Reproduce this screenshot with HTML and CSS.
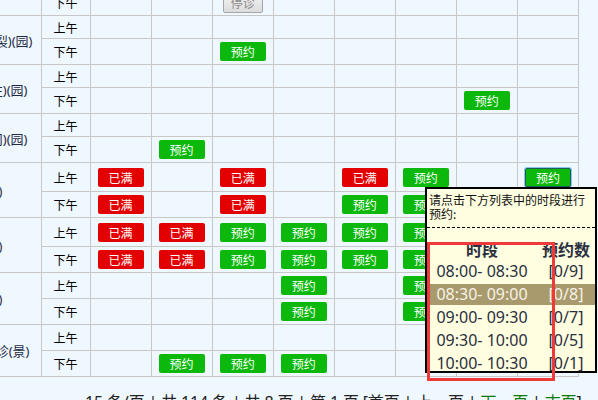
FILE: index.html
```html
<!DOCTYPE html>
<html lang="zh-CN">
<head>
<meta charset="utf-8">
<title>预约排班</title>
<link rel="stylesheet" href="styles.css">
</head>
<body>
<div class="page">
  <table class="sched">
    <colgroup>
      <col class="c-name"><col class="c-half">
      <col class="c-day"><col class="c-day"><col class="c-day"><col class="c-day">
      <col class="c-day"><col class="c-day"><col class="c-day"><col class="c-day">
    </colgroup>
    <tbody>
      <tr class="r26">
        <td class="name"></td><td class="half">下午</td>
        <td></td><td></td><td><button class="btn stop">停诊</button></td><td></td><td></td><td></td><td></td><td></td>
      </tr>

      <tr class="r23">
        <td class="name pr8" rowspan="2"><span>口腔颌面外科(唇腭裂)(园)</span></td><td class="half">上午</td>
        <td></td><td></td><td></td><td></td><td></td><td></td><td></td><td></td>
      </tr>
      <tr class="r26">
        <td class="half">下午</td>
        <td></td><td></td><td><button class="btn ok">预约</button></td><td></td><td></td><td></td><td></td><td></td>
      </tr>

      <tr class="r23">
        <td class="name pr13" rowspan="2"><span>口腔修复科(桩柱)(园)</span></td><td class="half">上午</td>
        <td></td><td></td><td></td><td></td><td></td><td></td><td></td><td></td>
      </tr>
      <tr class="r26">
        <td class="half">下午</td>
        <td></td><td></td><td></td><td></td><td></td><td></td><td><button class="btn ok">预约</button></td><td></td>
      </tr>

      <tr class="r23">
        <td class="name pr13" rowspan="2"><span>口腔急诊(夜间)(园)</span></td><td class="half">上午</td>
        <td></td><td></td><td></td><td></td><td></td><td></td><td></td><td></td>
      </tr>
      <tr class="r26">
        <td class="half">下午</td>
        <td></td><td><button class="btn ok">预约</button></td><td></td><td></td><td></td><td></td><td></td><td></td>
      </tr>

      <tr class="r29">
        <td class="name pr38" rowspan="2"><span>口腔正畸科专家门诊(主任)</span></td><td class="half">上午</td>
        <td><button class="btn full">已满</button></td><td></td><td><button class="btn full">已满</button></td><td></td>
        <td><button class="btn full">已满</button></td><td><button class="btn ok">预约</button></td><td></td><td><button class="btn ok focus">预约</button></td>
      </tr>
      <tr class="r26">
        <td class="half">下午</td>
        <td><button class="btn full">已满</button></td><td></td><td><button class="btn full">已满</button></td><td></td>
        <td><button class="btn ok">预约</button></td><td><button class="btn ok">预约</button></td><td></td><td><button class="btn ok">预约</button></td>
      </tr>

      <tr class="r29">
        <td class="name pr38" rowspan="2"><span>口腔内科专家门诊(副主任)</span></td><td class="half">上午</td>
        <td><button class="btn full">已满</button></td><td><button class="btn full">已满</button></td><td><button class="btn ok">预约</button></td><td><button class="btn ok">预约</button></td>
        <td><button class="btn ok">预约</button></td><td><button class="btn ok">预约</button></td><td><button class="btn ok">预约</button></td><td></td>
      </tr>
      <tr class="r26">
        <td class="half">下午</td>
        <td><button class="btn full">已满</button></td><td><button class="btn full">已满</button></td><td><button class="btn ok">预约</button></td><td><button class="btn ok">预约</button></td>
        <td><button class="btn ok">预约</button></td><td><button class="btn ok">预约</button></td><td><button class="btn ok">预约</button></td><td></td>
      </tr>

      <tr class="r26">
        <td class="name pr38" rowspan="2"><span>儿童口腔科普通门诊(医师)</span></td><td class="half">上午</td>
        <td></td><td></td><td></td><td><button class="btn ok">预约</button></td>
        <td></td><td><button class="btn ok">预约</button></td><td></td><td></td>
      </tr>
      <tr class="r26">
        <td class="half">下午</td>
        <td></td><td></td><td></td><td><button class="btn ok">预约</button></td>
        <td></td><td><button class="btn ok">预约</button></td><td></td><td></td>
      </tr>

      <tr class="r26">
        <td class="name pr11" rowspan="2"><span>口腔特需门诊(景)</span></td><td class="half">上午</td>
        <td></td><td></td><td></td><td></td><td></td><td></td><td></td><td></td>
      </tr>
      <tr class="r26">
        <td class="half">下午</td>
        <td></td><td><button class="btn ok">预约</button></td><td><button class="btn ok">预约</button></td><td><button class="btn ok">预约</button></td>
        <td></td><td></td><td></td><td></td>
      </tr>
    </tbody>
  </table>

  <div class="pager">15 条/页 | 共 114 条 | 共 8 页 | 第 1 页 [首页 | 上一页 | <a class="link">下一页</a> | <a class="link">末页</a>]</div>

  <div class="tip">
    <div class="tip-msg">请点击下方列表中的时段进行预约:</div>
    <div class="tip-sep"></div>
    <table class="slots">
      <thead>
        <tr><th>时段</th><th>预约数</th></tr>
      </thead>
      <tbody>
        <tr><td>08:00- 08:30</td><td>[0/9]</td></tr>
        <tr class="hover"><td>08:30- 09:00</td><td>[0/8]</td></tr>
        <tr><td>09:00- 09:30</td><td>[0/7]</td></tr>
        <tr><td>09:30- 10:00</td><td>[0/5]</td></tr>
        <tr><td>10:00- 10:30</td><td>[0/1]</td></tr>
      </tbody>
    </table>
  </div>

  <div class="mark"></div>
</div>
</body>
</html>
```
FILE: styles.css
```css
* { box-sizing: border-box; }

html, body {
  margin: 0;
  padding: 0;
  background: #f0f8ff;
}

.page {
  position: relative;
  width: 598px;
  height: 400px;
  overflow: hidden;
  font-family: "Noto Sans", "Noto Sans CJK SC", sans-serif;
  color: #222;
}

.sched {
  border-collapse: collapse;
  table-layout: fixed;
  width: 579px;
  margin-top: -11px;
}

.c-name { width: 41px; }
.c-half { width: 49px; }
.c-day { width: 61px; }

.sched td {
  border: 1px solid #c8c8c8;
  padding: 0;
  text-align: center;
  vertical-align: middle;
}

.r23 { height: 23px; }
.r26 { height: 26px; }
.r29 { height: 29px; }

.sched td.name {
  border-left: none;
  font-size: 13px;
  color: #1f2a44;
  white-space: nowrap;
  overflow: hidden;
}
.name span {
  display: flex;
  justify-content: flex-end;
}
.pr8 span { padding-right: 8px; }
.pr11 span { padding-right: 11px; }
.pr13 span { padding-right: 13px; }
.pr38 span { padding-right: 38px; }

.sched td.half {
  font-family: "Noto Sans CJK SC", sans-serif;
  font-size: 12px;
  color: #000;
}

.btn {
  display: block;
  margin: 0 auto;
  width: 46px;
  height: 19px;
  padding: 0;
  border: none;
  border-radius: 2px;
  font-family: "Noto Sans CJK SC", sans-serif;
  font-size: 12px;
  line-height: 19px;
  color: #fff;
}
.btn.ok { background: #0bb80b; }
.btn.full { background: #e30000; }
.btn.focus {
  border: 1px solid #1d5f55;
  box-shadow: 0 0 0 1px #8ec1ee;
  line-height: 17px;
}
.btn.stop {
  width: 40px;
  height: 21px;
  background: linear-gradient(#f4f4f4, #dcdcdc);
  border: 1px solid #a6a6a6;
  color: #8a8a8a;
  line-height: 19px;
}

.pager {
  margin-top: 15px;
  padding-left: 85px;
  font-size: 16px;
  line-height: 20px;
  letter-spacing: -0.15px;
  color: #222;
  white-space: nowrap;
}
.link { color: #0a7a0a; }

.tip {
  position: absolute;
  left: 425px;
  top: 187px;
  width: 172px;
  height: 186px;
  background: #fffee0;
  border: 2px solid #000;
}
.tip-msg {
  padding: 4px 2px 0 2px;
  font-family: "Noto Sans CJK SC", sans-serif;
  font-size: 12px;
  line-height: 14px;
  color: #111;
}
.tip-sep {
  margin-top: 6px;
  border-top: 1px dashed #000;
}
.slots {
  margin-top: 10px;
  width: 100%;
  border-collapse: separate;
  border-spacing: 0 2px;
  font-size: 16px;
  color: #2a2f3f;
}
.slots th {
  font-family: "Noto Sans CJK SC", sans-serif;
  font-weight: bold;
  line-height: 19px;
  padding: 0;
}
.slots td {
  padding: 0;
  line-height: 21px;
  text-align: center;
  white-space: nowrap;
}
.slots tr.hover td {
  background: #a89a6c;
  color: #f6f2e6;
}

.mark {
  position: absolute;
  left: 427px;
  top: 242px;
  width: 128px;
  height: 139px;
  border: 3px solid #ee3a3a;
}
```
